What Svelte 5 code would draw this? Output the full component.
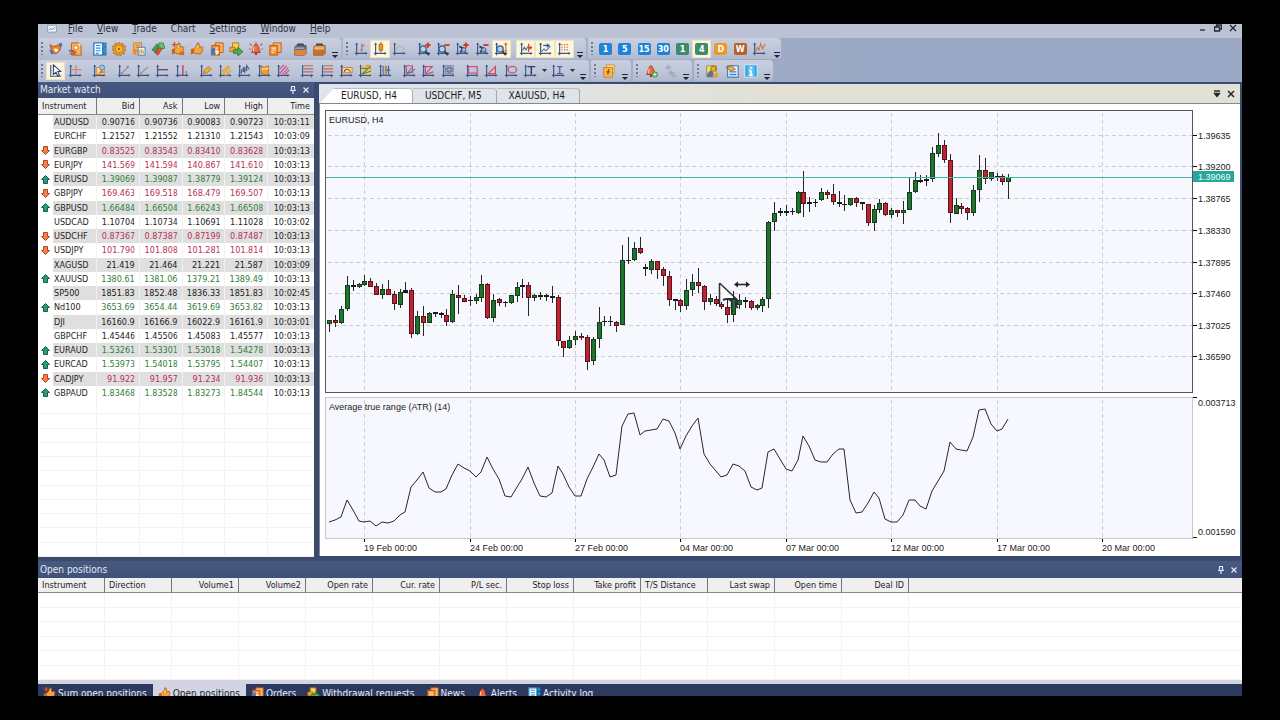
<script>
  // ---------- icons (16 x 16 grid) ----------
  const ax = '<path d="M3 1v14M1 13h14" stroke="#3c568c" stroke-width="1.3" fill="none"/><path d="M1.4 3L3 .6 4.600 3zM13 11.400L15.400 13 13 14.600z" fill="#3c568c"/>';
  const lens = '<circle cx="7" cy="8" r="3.600" fill="#a9d4f2" stroke="#3f5876" stroke-width="1.4"/><path d="M9.500 10.500l4 4.500" stroke="#2d3a50" stroke-width="2.200"/>';
  const plus = '<path d="M12.500 .5v6M9.500 3.500h6" stroke="#d83a24" stroke-width="2.200"/>';
  const minus = '<path d="M9.500 3.500h6" stroke="#d83a24" stroke-width="2.200"/>';
  const thumb = '<path d="M4 8l3.500-3.500L8.500 1c2-.3 2.500 1.500 1.500 4.500h3.500c1.700 0 1.500 2 .4 2.200 1 .6.800 2-.3 2.200.6.800.3 1.800-.7 2 .3 1-.3 1.600-1.400 1.600H7L4 12z" fill="#f5a238" stroke="#a85512" stroke-width=".9"/><path d="M8 6.500l1.500-2.500" stroke="#ffe2a0" stroke-width="1.300"/><path d="M1 8l3-.5v6L1 14z" fill="#c8641c"/>';
  const docs = '<path d="M6 1h9v11H6z" fill="#f9b765" stroke="#b9580f"/><path d="M2 4h9v11H2z" fill="#f58a2c" stroke="#b9580f"/><path d="M4 7h5M4 9.500h5M4 12h3" stroke="#fff0cf" stroke-width="1.200"/>';
  const caseIcon = (a, b) => `<path d="M5.500 5V2.500h6V5" fill="none" stroke="#404452" stroke-width="1.600"/><path d="M2 5.500L4 4h11v9l-2 2H2z" fill="${a}" stroke="#5b4030" stroke-width=".8"/><path d="M2 9h11l2-1.500V13l-2 2H2z" fill="${b}"/><path d="M2 7h11" stroke="#f7cf96" stroke-width="1"/>`;
  const bell = '<path d="M3 12c2-2 1.200-7 3.500-8.500C6.800 1.500 9.200 1.500 9.500 3.500 11.800 5 11 10 13 12z" fill="#ee6a3e" stroke="#a72d1b" stroke-width=".9"/><path d="M6 5.500c-.8 1.500-.4 3.500-1 5" stroke="#ffd0b0" stroke-width="1.300" fill="none"/><circle cx="8" cy="13.500" r="1.500" fill="#b23a20"/>';

  const icons = {
    app: '<path d="M1 2h14v11H1z" fill="#edf2fa" stroke="#6d7ea3"/><path d="M3 10l3-3 3 2 4-4" stroke="#3a8a5c" fill="none" stroke-width="1.300"/>',
    fox: '<path d="M1 3l4 2 4-1 5-2-1 7-5 5-5-4z" fill="#ee7c25" stroke="#9d4311" stroke-width=".8"/><path d="M5 8l3-1 3 2-3 3z" fill="#fff1dc"/><path d="M1 8l5 6H3L1 11z" fill="#3971bd"/><path d="M11 2l4-1v3l-2 2z" fill="#3971bd"/>',
    profile: '<path d="M4 1h8l3 3v11H4z" fill="#f8b15c" stroke="#ad5c18"/><path d="M12 1v3h3" fill="#fff2d6"/><circle cx="9" cy="6.500" r="2.300" fill="#fff" stroke="#d86f1c"/><path d="M1 14l5-5 4 2-2 4z" fill="#db6120"/><path d="M1 9h5v2H1z" fill="#4674b8"/>',
    book: '<path d="M1 1h10v14H1z" fill="#f2faff" stroke="#2d7fc1" stroke-width="1.500"/><path d="M3.500 4h5M3.500 7h5M3.500 10h5M3.500 13h3" stroke="#2f8fd4" stroke-width="1.300"/><path d="M12 1h3v4h-3zM12 6h3v4h-3zM12 11h3v4h-3z" fill="#2c9ae4" stroke="#18639f" stroke-width=".7"/>',
    gear: '<path d="M8 0l1.600 2.300 2.700-1 .5 2.800 2.800.5-1 2.700L16 9l-2.200 1.600.4 2.800-2.800.1L9.600 16 8 14l-2 2-1.500-2.500-2.800-.2.500-2.800L0 9l1.500-2L.6 4.500l2.700-.6.400-2.800 2.800 1z" fill="#e99a22" stroke="#9b5a10" stroke-width=".7"/><circle cx="8" cy="8" r="4" fill="#ffd257" stroke="#b36a12"/><circle cx="8" cy="8" r="1.700" fill="#a96414"/>',
    report: '<path d="M2 1h9v9H2z" fill="#ffc46c" stroke="#c4721c"/><path d="M4 3.500h5M4 6h5" stroke="#b3631b"/><path d="M7 6h8v9H7z" fill="#e9f4fd" stroke="#3278b5"/><path d="M1 9l4-2v8l-4-1z" fill="#f58a20"/><path d="M9 13V9M11 13V8M13 13v-3" stroke="#ef8a25" stroke-width="1.300"/>',
    trade: '<path d="M1 9l6-7 3 3-2 2 1 5-5-1z" fill="#35a254" stroke="#1d6932" stroke-width=".7"/><path d="M9 1h5l2 6-4 1-3-3z" fill="#6bbf6c" stroke="#1d6932" stroke-width=".7"/><path d="M13 7l-5 8-4-3 3-1V7h3z" fill="#e4532f" stroke="#96301a" stroke-width=".7"/>',
    thumbs: thumb + '<path d="M4 0v6M1 3h6" stroke="#dc4b28" stroke-width="1.600"/><path d="M10 11h5v4h-5z" fill="#da671e"/>',
    thumb,
    orders: docs + '<path d="M1 8l5-2v8l-5 1z" fill="#4f76b4"/><path d="M6 9l5 2-4 4z" fill="#fff0ce"/>',
    money: '<path d="M4 1h7v7H4z" fill="#ffd04c" stroke="#ad7315"/><path d="M1 6h6v5H1z" fill="#f1a727" stroke="#a86514" stroke-width=".8"/><path d="M5 9h5V6l6 5-6 5v-3H5z" fill="#49ad4c" stroke="#22702a" stroke-width=".8"/>',
    alarm: bell + '<path d="M1 2l2 2M15 2l-2 2M8 0v1.500M0 8h2M14 8h2" stroke="#d94b33" stroke-width="1.300"/>',
    bell,
    news: docs,
    caseBlue: caseIcon('#496fa6', '#e28435'),
    caseOrange: caseIcon('#e9994c', '#c96f26'),
    bars: ax + '<path d="M9 2v9M7 9h2M9 4h3" stroke="#d07060" stroke-width="1.500"/>',
    candles: ax + '<path d="M9 0v12" stroke="#8c4a10"/><path d="M7 2.500h4v7H7z" fill="#f59a22" stroke="#b15e0f"/>',
    curve: ax + '<path d="M4 11c2-8 7-8 10-2" fill="none" stroke="#c1b48a" stroke-width="1.400"/>',
    zoomIn: ax + lens + plus,
    zoomOut: ax + lens + minus,
    stretch: ax + '<path d="M5 5l4 2 3 5M6 12l3-5" stroke="#2f4165" stroke-width="2"/><circle cx="10" cy="9" r="2.500" fill="#99bfe0" stroke="#394c70"/>' + plus,
    shrink: ax + '<path d="M5 5l4 2 3 5M6 12l3-5" stroke="#2f4165" stroke-width="2"/><circle cx="10" cy="9" r="2.500" fill="#99bfe0" stroke="#394c70"/>' + minus,
    fit: ax + lens + '<path d="M13.500 2v8" stroke="#d8722a" stroke-width="1.400"/><path d="M11.500 3.500L13.500 0l2 3.500zM11.500 9l2 3 2-3z" fill="#d8722a"/>',
    shift: ax + '<path d="M4 10l2-4 2 3 2-4" fill="none" stroke="#50658e" stroke-width="1.200"/><path d="M11 2v9M15 6.500h-3" stroke="#cf4434" stroke-width="1.500"/><path d="M11 6.500l3-2.500v5z" fill="#cf4434"/>',
    scroll: ax + '<path d="M4 11l3-3 2 2 5-5" fill="none" stroke="#546a92" stroke-width="1.200"/><path d="M6 4h5" stroke="#2a5fa8" stroke-width="1.500"/><path d="M10 1.500L14 4l-4 2.500z" fill="#2a5fa8"/>',
    grid: ax + '<path d="M5 3h9M5 6h9M5 9h9" stroke="#d0654f" stroke-width="1.400" stroke-dasharray="1.500 1.500"/>',
    volatility: ax + '<path d="M4 11l2-5 2 3 2-7 2 6 3-6" fill="none" stroke="#d0764a" stroke-width="1.300"/>',
    pointer: '<path d="M2 1v12M1 14h13" stroke="#3d5c9c" stroke-width="1.300"/><path d="M5 1v11l3-2.500L10 14l2-1-2-4.500h3.500z" fill="#fff" stroke="#27437e" stroke-width="1.200"/>',
    cross: ax + '<path d="M9 1v11M4 6.500h11" stroke="#dd8465" stroke-width="1.400"/>',
    note: ax + '<path d="M5 4h9v8H5z" fill="#f6d9a3" stroke="#d87c2b"/><path d="M7 11l4-5 3 4z" fill="#e8752c"/><circle cx="11.500" cy="4" r="2.800" fill="#8fcdf2" stroke="#3d84bc"/>',
    segment: ax + '<path d="M5 11l7-7" stroke="#c08078" stroke-width="1.300"/><path d="M4 9.500h2.500V12H4zM11 2h2.500v2.500H11z" fill="#8a90ac"/>',
    ray: ax + '<path d="M4 12L14 3" stroke="#a38a98" stroke-width="1.400"/>',
    hline: ax + '<path d="M3 6.500h12" stroke="#7c3c66" stroke-width="1.500"/>',
    vline: ax + '<path d="M9 1v12" stroke="#cb3450" stroke-width="1.500"/><path d="M13 8v5" stroke="#5a6c95"/>',
    pencil: ax + '<path d="M5 11l1-4 5-4 3 3-5 4z" fill="#f3b02d" stroke="#b66c15" stroke-width=".9"/>',
    marker: ax + '<path d="M5 12L14 3M4 9l8-7M8 13l7-6" stroke="#eaa72c" stroke-width="1.800"/>',
    waves: ax + '<path d="M5 11V6M7 9V4l2 6V3M11 8V2l3 4" stroke="#4f5e88" stroke-width="1.400" fill="none"/>',
    channel: ax + '<path d="M5 2l3 2 5-2v9l-4 1-4-1z" fill="#f2a12d" stroke="#c26c14"/><path d="M5 6l8-1" stroke="#fff0b6" stroke-width="1.300"/>',
    fork: ax + '<path d="M4 11L12 2M7 12l7-8M4 6l5-5M10 12l5-5" stroke="#d2497c" stroke-width="1.300"/>',
    fibo: '<path d="M3 1v14M13 12v3" stroke="#3c568c" stroke-width="1.300"/><path d="M4 2h11M4 5.500h11M4 9h11" stroke="#bb6a50" stroke-width="1.300"/><path d="M1 13h14" stroke="#3c568c" stroke-width="1.300"/>',
    arcs: ax + '<path d="M4 4h11v6H4z" fill="#f7d9a4" stroke="#c97a2f"/><path d="M6 9c1-4 5-4 7 0" fill="none" stroke="#704f35" stroke-width="1.200"/>',
    fan: ax + '<path d="M4 2h11v10H4z" fill="#f8c45c"/><path d="M4 12L14 3M4 12l11-4M4 5h8" stroke="#468a5a" stroke-width="1.400"/><path d="M9 2h5v4" stroke="#d5672f" fill="none"/>',
    zones: ax + '<path d="M6 2v10M9 2v10M12 2v10M5 7h9" stroke="#4b5f86" stroke-width="1.300"/><path d="M6.500 3h2v8h-2z" fill="#ecb74d"/>',
    gann1: ax + '<path d="M5 2h7v8H5z" fill="none" stroke="#cc4c71" stroke-width="1.300"/><path d="M5 12l10-6M5 12l6-8" stroke="#6f6f8b" stroke-width="1.200"/>',
    gann2: ax + '<path d="M5 3h8l-8 8z" fill="none" stroke="#cc4c71" stroke-width="1.300"/><path d="M5 12l9-3" stroke="#cc4c71" stroke-width="1.300"/>',
    gann3: ax + '<path d="M5 2h9v9H5zM5 5h9M5 8h9M8 2v9M11 2v9" fill="none" stroke="#6f7690" stroke-width=".9"/><circle cx="9.500" cy="6.500" r="3" fill="none" stroke="#5a6382"/>',
    rect: ax + '<path d="M4 3h10v7.500H4z" fill="none" stroke="#cf5577" stroke-width="1.500"/>',
    triangle: ax + '<path d="M5 11L13 3v8z" fill="#e8c1d0" stroke="#cf4562" stroke-width="1.400"/>',
    ellipse: ax + '<ellipse cx="9.500" cy="6.500" rx="4.800" ry="3.800" fill="none" stroke="#cf5577" stroke-width="1.500"/>',
    textT: ax + '<path d="M5 3h9M9.500 3v9" stroke="#2e3e5c" stroke-width="1.700"/>',
    textI: ax + '<path d="M7 3h6M10 3v8M7 11h6" stroke="#55648a" stroke-width="1.500"/>',
    script: '<path d="M5 1h9v9H5z" fill="#ffe09a" stroke="#d98d24"/><path d="M2 4h10v11H2z" fill="#ffb846" stroke="#cf7a16"/><path d="M8.500 6c-2 0-1 3-2 6.500M5 9h4" stroke="#7c4a12" stroke-width="1.300" fill="none"/>',
    alertAdd: bell + '<circle cx="12.500" cy="12" r="3.500" fill="#45a649"/><path d="M12.500 10v4M10.500 12h4" stroke="#fff" stroke-width="1.300"/>',
    muted: '<path d="M6 1v6M3 4h6M9 7v6M6 10h7M12 11v5M10 13.500h5" stroke="#a1aac3" stroke-width="2"/><circle cx="7" cy="7" r="2" fill="#b7bfd2"/>',
    tools: '<path d="M2 2h11v10H2z" fill="#f7dd83" stroke="#a2812d"/><path d="M2 12l4-5 4 3 3 5H2z" fill="#5c7496"/><circle cx="9.500" cy="5.500" r="3" fill="#f2b61d" stroke="#8d6312"/><path d="M9 11h6v4H9z" fill="#e8a322"/>',
    sheet: '<path d="M3 2h12v13H3z" fill="#f3f8fc" stroke="#3d7cb5" stroke-width="1.300"/><path d="M1 4l7-2 4 4-5 2z" fill="#f0ae45" stroke="#7c5620" stroke-width=".8"/><path d="M5 9h8M5 12h8" stroke="#2d83c2" stroke-width="1.500"/>',
    info: '<path d="M1 1h14v14H1z" fill="#2da4e2" stroke="#d9f0fc" stroke-width="1"/><path d="M4 2h8v12H4z" fill="#61c3f1"/><path d="M8 3.500v2M8 7v6M6 7.500h2M6 13h4" stroke="#fff" stroke-width="2"/>'
  };

  const sep = '|';
  const topBars = [
    { size: 'a1', items: ['fox', 'profile', sep, 'book', 'gear', 'report', 'trade', 'thumbs', 'thumb', 'orders', 'money', 'alarm', 'news', sep, 'caseBlue', 'caseOrange'] },
    { size: 'a2', on: ['candles', 'fit', 'shift', 'scroll', 'grid'], items: ['bars', 'candles', 'curve', sep, 'zoomIn', 'zoomOut', 'stretch', 'shrink', 'fit', sep, 'shift', 'scroll', 'grid'] },
    { size: 'a3', on: ['H4'], items: ['M1', 'M5', 'M15', 'M30', 'H1', 'H4', 'D', 'W', 'volatility'] }
  ];
  const drawBars = [
    { size: 'b1', on: ['pointer'], items: ['pointer', 'cross', sep, 'note', sep, 'segment', 'ray', 'hline', 'vline', sep, 'pencil', 'marker', 'waves', 'channel', 'fork', sep, 'fibo', 'fibo', 'arcs', 'fan', 'zones', sep, 'gann1', 'gann2', 'gann3', sep, 'rect', 'triangle', 'ellipse', 'textT', 'v', 'textI', 'v'] },
    { size: 'b2', items: ['script'] },
    { size: 'b3', items: ['alertAdd', 'muted'] },
    { size: 'b4', items: ['tools', 'sheet', 'info'] }
  ];
  const frames = { M1: ['1', 'blue'], M5: ['5', 'blue'], M15: ['15', 'blue'], M30: ['30', 'blue'], H1: ['1', 'green'], H4: ['4', 'green'], D: ['D', 'amber'], W: ['W', 'brown'] };

  const menus = ['File', 'View', 'Trade', 'Chart', 'Settings', 'Window', 'Help'];

  // ---------- market watch ----------
  // name, direction, bid, ask, low, high, time; five-digit quotes show a small last digit
  const quotes = [
    ['AUDUSD', '', '0.90716', '0.90736', '0.90083', '0.90723', '10:03:11'],
    ['EURCHF', '', '1.21527', '1.21552', '1.21310', '1.21543', '10:03:09'],
    ['EURGBP', 'down', '0.83525', '0.83543', '0.83410', '0.83628', '10:03:13'],
    ['EURJPY', 'down', '141.569', '141.594', '140.867', '141.610', '10:03:13'],
    ['EURUSD', 'up', '1.39069', '1.39087', '1.38779', '1.39124', '10:03:13'],
    ['GBPJPY', 'down', '169.463', '169.518', '168.479', '169.507', '10:03:13'],
    ['GBPUSD', 'up', '1.66484', '1.66504', '1.66243', '1.66508', '10:03:13'],
    ['USDCAD', '', '1.10704', '1.10734', '1.10691', '1.11028', '10:03:02'],
    ['USDCHF', 'down', '0.87367', '0.87387', '0.87199', '0.87487', '10:03:13'],
    ['USDJPY', 'down', '101.790', '101.808', '101.281', '101.814', '10:03:13'],
    ['XAGUSD', '', '21.419', '21.464', '21.221', '21.587', '10:03:09'],
    ['XAUUSD', 'up', '1380.61', '1381.06', '1379.21', '1389.49', '10:03:13'],
    ['SP500', '', '1851.83', '1852.48', '1836.33', '1851.83', '10:02:45'],
    ['Nd100', 'up', '3653.69', '3654.44', '3619.69', '3653.82', '10:03:13'],
    ['DJI', '', '16160.9', '16166.9', '16022.9', '16161.9', '10:03:01'],
    ['GBPCHF', '', '1.45446', '1.45506', '1.45083', '1.45577', '10:03:13'],
    ['EURAUD', 'up', '1.53261', '1.53301', '1.53018', '1.54278', '10:03:13'],
    ['EURCAD', 'up', '1.53973', '1.54018', '1.53795', '1.54407', '10:03:13'],
    ['CADJPY', 'down', '91.922', '91.957', '91.234', '91.936', '10:03:13'],
    ['GBPAUD', 'up', '1.83468', '1.83528', '1.83273', '1.84544', '10:03:13']
  ];
  const plain = ['XAGUSD', 'XAUUSD', 'SP500', 'Nd100', 'DJI'];
  const blankRows = Array(11).fill(0);

  // ---------- chart data: high, body top, body bottom, low, kind ----------
  const candles = `320 320 324 332 g|315 320 323 327 r|306 309 323 324 g|276 285 309 311 g|280 285 287 291 k|283 284 287 288 g|275 281 285 286 g|278 281 287 287 r|283 286 295 295 r|284 289 295 299 g|280 289 295 295 r|291 294 304 310 r|289 292 305 308 g|282 290 293 293 k|288 290 334 338 r|311 316 334 335 g|306 316 323 336 r|312 313 323 323 g|312 312 314 317 k|312 313 315 318 k|309 315 322 326 r|290 294 322 323 g|285 295 298 314 r|295 298 302 302 r|296 300 301 306 k|294 297 301 304 g|275 284 298 302 g|283 284 318 319 r|294 300 318 322 g|298 299 303 306 r|301 302 303 307 k|295 295 303 304 g|282 287 296 302 g|279 285 287 298 k|282 285 298 316 r|294 295 298 301 g|292 295 297 300 k|294 295 297 301 k|286 296 298 303 k|295 297 341 346 r|341 341 348 357 r|336 340 348 349 g|331 336 340 345 g|333 336 338 340 r|335 337 362 370 r|337 339 361 365 g|307 322 339 348 g|316 321 322 326 k|316 321 322 326 k|321 322 326 332 r|245 260 325 325 g|237 260 261 264 k|242 248 260 261 g|237 248 253 254 r|264 267 269 276 k|259 261 270 274 g|261 261 270 279 r|267 269 276 286 r|271 276 300 306 r|299 299 301 310 k|299 300 306 312 r|279 290 306 310 g|274 282 290 296 g|268 282 286 293 r|285 286 302 310 r|294 298 302 305 g|296 299 304 306 r|302 304 307 309 r|300 307 315 323 r|291 299 315 322 g|294 300 305 309 g|297 300 302 308 k|300 301 308 310 r|304 305 308 310 g|297 299 306 312 g|221 222 299 308 g|202 213 222 231 g|208 211 213 216 k|205 211 213 216 k|208 211 212 215 k|191 192 213 214 g|171 192 204 217 r|197 202 204 212 k|199 202 203 207 k|188 192 200 201 g|190 192 195 199 r|184 194 202 205 r|191 202 204 207 k|195 204 205 211 k|198 198 205 206 g|197 198 203 207 r|202 202 204 210 k|204 204 223 226 r|205 209 223 231 g|199 203 210 213 g|202 203 215 216 r|208 210 215 218 g|210 210 213 217 r|201 210 213 224 g|178 192 210 210 g|172 180 192 193 g|175 180 182 183 k|175 179 181 186 k|147 153 179 182 g|133 145 154 157 g|140 145 160 163 r|154 160 213 223 r|198 205 214 214 g|203 206 209 214 r|207 208 213 220 r|185 190 213 216 g|155 170 190 202 g|158 170 179 184 r|172 172 179 181 g|173 176 177 181 k|174 176 182 185 r|174 177 182 199 g`
    .split('|').map((row, i) => {
      const [h, t, b, l, kind] = row.split(' ');
      return { x: barX(i), h: +h, t: +t, b: +b, l: +l, kind };
    });
  const edge = { g: '#143c1b', r: '#571419', k: '#1d1a1e' };
  const body = { g: '#20732d', r: '#bd2330' };

  const atr = [522,520,517,500,510,521,522,521,526,522,523,521,515,512,487,480,472,488,492,492,489,475,464,468,471,477,472,457,469,479,496,497,487,479,467,483,496,497,493,466,474,487,496,496,479,467,454,460,477,475,426,414,413,435,431,430,429,419,421,433,449,436,426,418,454,464,471,477,475,464,466,471,487,490,488,452,449,459,469,471,460,436,446,460,462,462,454,449,449,500,513,512,503,492,498,519,522,522,515,500,500,506,509,491,481,471,442,449,450,451,437,410,409,424,431,429,419];
  const atrPoints = atr.map((y, i) => `${barX(i)},${y}`).join(' ');

  function barX(i) {
    return Math.round(329.3 + i * 5.853);
  }

  const dates = ['19 Feb 00:00', '24 Feb 00:00', '27 Feb 00:00', '04 Mar 00:00', '07 Mar 00:00', '12 Mar 00:00', '17 Mar 00:00', '20 Mar 00:00']
    .map((label, i) => ({ label, x: barX(6 + i * 18) }));
  const levels = [['1.39635', 135], ['1.39200', 166], ['1.38765', 198], ['1.38330', 230], ['1.37895', 262], ['1.37460', 293], ['1.37025', 325], ['1.36590', 356]];

  const chartTabs = ['EURUSD, H4', 'USDCHF, M5', 'XAUUSD, H4'];
  const positionCols = ['Instrument', 'Direction', 'Volume1', 'Volume2', 'Open rate', 'Cur. rate', 'P/L sec.', 'Stop loss', 'Take profit', 'T/S Distance', 'Last swap', 'Open time', 'Deal ID'];
  const leftCols = ['Instrument', 'Direction', 'T/S Distance'];
  const bottomTabs = [['thumbs', 'Sum open positions'], ['thumb', 'Open positions'], ['orders', 'Orders'], ['money', 'Withdrawal requests'], ['news', 'News'], ['bell', 'Alerts'], ['book', 'Activity log']];
</script>

{#snippet icon(name)}
  <svg class="icon" viewBox="0 0 16 16" aria-hidden="true">{@html icons[name]}</svg>
{/snippet}

{#snippet toolbar(bar)}
  <div class="bar {bar.size}">
    <span class="grip"></span>
    {#each bar.items as item}
      {#if item === sep}
        <span class="sep"></span>
      {:else if item === 'v'}
        <button class="drop" aria-label="More"><svg viewBox="0 0 5 3"><path d="M0 0h5L2.500 3z" /></svg></button>
      {:else}
        <button class="tool" class:on={bar.on?.includes(item)} aria-label={item}>
          {#if frames[item]}
            <span class="frame {frames[item][1]}">{frames[item][0]}</span>
          {:else}
            {@render icon(item)}
          {/if}
        </button>
      {/if}
    {/each}
    <button class="more" aria-label="Toolbar options"><svg viewBox="0 0 6 6"><path d="M0 0h6v1H0zM0 3h6L3 6z" /></svg></button>
  </div>
{/snippet}

{#snippet panelTitle(text)}
  <header class="title">
    <h2>{text}</h2>
    <button aria-label="Pin"><svg viewBox="0 0 8 8"><path d="M2 .5h4M2.500 .5v4M5.500 .5v4M1 4.500h6M4 4.500V8" /></svg></button>
    <button aria-label="Close"><svg viewBox="0 0 8 8"><path d="M1.500 1.500l5 5M6.500 1.500l-5 5" /></svg></button>
  </header>
{/snippet}

<div class="screen">
  <div class="window">
    <nav class="menu">
      {@render icon('app')}
      {#each menus as m}
        <button>{#if m === 'Chart'}{m}{:else}<u>{m[0]}</u>{m.slice(1)}{/if}</button>
      {/each}
      <span class="winctl">
        <button aria-label="Minimize"><svg viewBox="0 0 8 8"><path d="M1 6h5" /></svg></button>
        <button aria-label="Restore"><svg viewBox="0 0 8 8"><path d="M2.500 3V1h5v4h-2M.5 3h5v4h-5z" /></svg></button>
        <button aria-label="Close"><svg viewBox="0 0 8 8"><path d="M1 1l6 6M7 1L1 7" /></svg></button>
      </span>
    </nav>

    <div class="bars">{#each topBars as bar}{@render toolbar(bar)}{/each}</div>
    <div class="bars">{#each drawBars as bar}{@render toolbar(bar)}{/each}</div>

    <main>
      <section class="watch">
        {@render panelTitle('Market watch')}
        <div class="tablebox">
          <table>
            <colgroup><col class="c-name" /><col /><col /><col /><col /><col class="c-time" /></colgroup>
            <thead>
              <tr><th>Instrument</th><th>Bid</th><th>Ask</th><th>Low</th><th>High</th><th>Time</th></tr>
            </thead>
            <tbody>
              {#each quotes as [name, dir, ...cells]}
                <tr class={dir}>
                  <td>
                    <span class="name">
                      <svg viewBox="0 0 9 9" class="dir" aria-hidden="true">
                        {#if dir === 'up'}<path d="M4.500 .5L8.500 4.500H6.500V8.500H2.500V4.500H.5z" fill="#2f9a78" stroke="#15604c" />{/if}
                        {#if dir === 'down'}<path d="M4.500 8.500L8.500 4.500H6.500V.5H2.500V4.500H.5z" fill="#f3814d" stroke="#b9431c" />{/if}
                      </svg>
                      <span class="label">{name}</span>
                    </span>
                  </td>
                  {#each cells as c, i}
                    <td>{#if i < 4 && !plain.includes(name)}{c.slice(0, -1)}<small>{c.slice(-1)}</small>{:else}{c}{/if}</td>
                  {/each}
                </tr>
              {/each}
              {#each blankRows as _}
                <tr class="blank"><td></td><td></td><td></td><td></td><td></td><td></td></tr>
              {/each}
            </tbody>
          </table>
        </div>
      </section>

      <section class="charts">
        <div class="tabs">
          {#each chartTabs as t, i}<button class:active={i === 0}>{t}</button>{/each}
          <span class="tabctl">
            <button aria-label="List tabs"><svg viewBox="0 0 8 8"><path d="M1 1h6M1.500 3.500h5L4 6.500z" fill="#222" /></svg></button>
            <button aria-label="Close chart"><svg viewBox="0 0 8 8"><path d="M1 1l6 6M7 1L1 7" stroke-width="1.500" /></svg></button>
          </span>
        </div>
        <div class="plots">
          <div class="plot price">
            <svg>
              <g transform="translate(-326 -111)" shape-rendering="crispEdges">
                {#each levels as [, y]}<line class="gridline" x1="328" x2="3000" y1={y + 0.5} y2={y + 0.5} />{/each}
                {#each dates as d}<line class="gridline" x1={d.x + 0.5} x2={d.x + 0.5} y1="113" y2="393" />{/each}
                {#each candles as c}
                  <rect x={c.x} y={c.h} width="1" height={c.l - c.h} fill="#26262b" />
                  <rect x={c.x - 2} y={c.t} width="5" height={Math.max(1, c.b - c.t)} fill={edge[c.kind]} />
                  {#if c.kind !== 'k'}
                    <rect x={c.x - 1} y={c.t + 1} width="3" height={Math.max(1, c.b - c.t - 2)} fill={body[c.kind]} />
                  {/if}
                {/each}
                <rect x="326" y="177" width="3000" height="1" fill="#3fb3a4" />
              </g>
              <g transform="translate(-326 -111)">
                <path d="M721 286v15l4-2 9 0z" fill="#fff" opacity=".7" />
                <path d="M719.500 283v21M719.500 283l18 17" fill="none" stroke="#2f3038" stroke-width="1.500" />
                <path d="M723 300c4-2 9-1 9 3s-2 5 1 9M727 299h9c2 4-2 6 2 9" fill="none" stroke="#2f3038" stroke-width="2" />
                <path d="M736 284.500h12" stroke="#222" stroke-width="1.600" />
                <path d="M734 284.500l4-3v6zM750 284.500l-4-3v6z" fill="#222" />
              </g>
              <text x="3" y="12">EURUSD, H4</text>
            </svg>
          </div>
          <div class="axis">
            <svg>
              <g transform="translate(-1193 -110)">
                {#each levels as [label, y]}
                  <rect x="1193" {y} width="4" height="1" />
                  <text x="1198" y={y + 4}>{label}</text>
                {/each}
                <rect x="1193" y="171" width="41" height="11" fill="#27a699" />
                <text class="tag" x="1198" y="180">1.39069</text>
              </g>
            </svg>
          </div>
          <div class="plot atr">
            <svg>
              <g transform="translate(-326 -398)">
                {#each dates as d}<line class="gridline" x1={d.x + 0.5} x2={d.x + 0.5} y1="400" y2="538" />{/each}
                <polyline points={atrPoints} />
              </g>
              <text x="3" y="12">Average true range (ATR) (14)</text>
            </svg>
          </div>
          <div class="axis">
            <svg>
              <rect x="0" y="0" width="4" height="1" />
              <text x="5" y="9">0.003713</text>
              <text x="5" y="138">0.001590</text>
              <rect x="0" y="140" width="4" height="1" />
            </svg>
          </div>
          <div class="axis">
            <svg>
              <g transform="translate(-325 -539)">
                {#each dates as d}
                  <rect x={d.x} y="539" width="1" height="3" />
                  <text x={d.x} y="551">{d.label}</text>
                {/each}
              </g>
            </svg>
          </div>
        </div>
      </section>
    </main>

    <section class="positions">
      {@render panelTitle('Open positions')}
      <div class="tablebox">
        <table>
          <colgroup>{#each positionCols as _}<col class="c-pos" />{/each}<col /></colgroup>
          <thead>
            <tr>{#each positionCols as c}<th class:left={leftCols.includes(c)}>{c}</th>{/each}<th></th></tr>
          </thead>
          <tbody>
            {#each Array(6) as _}
              <tr class="blank">{#each positionCols as _}<td></td>{/each}<td></td></tr>
            {/each}
          </tbody>
        </table>
      </div>
    </section>

    <nav class="bottom">
      {#each bottomTabs as [ic, label], i}
        <button class:active={i === 1}>{@render icon(ic)}{label}</button>
      {/each}
    </nav>
  </div>
</div>

<style>
  :global(body) { margin: 0; background: #000; }
  .screen { box-sizing: border-box; height: 100vh; padding: 24px 38px; background: #000; }
  .window {
    height: 100%; display: flex; flex-direction: column; overflow: hidden;
    background: #3b4a6f; color: #1c1c22;
    font: 10px/12px "DejaVu Sans Condensed", "DejaVu Sans", sans-serif;
  }
  button { border: 0; margin: 0; padding: 0; background: none; font: inherit; color: inherit; white-space: nowrap; flex: none; }
  svg { display: block; flex: none; }
  .icon { width: 14px; height: 14px; }

  .menu { flex: none; height: 14px; display: flex; align-items: flex-start; gap: 14px; padding-left: 8px; background: #bac2d4; color: #2b3040; }
  .menu > button { line-height: 9px; }
  .menu .icon { width: 12px; height: 10px; margin-right: -4px; }
  .winctl { margin-left: auto; display: flex; gap: 7px; padding-right: 5px; }
  .winctl svg, .tabctl svg { width: 8px; height: 8px; fill: none; stroke: #22262f; stroke-width: 1.3; }

  .bars { flex: none; height: 22px; display: flex; gap: 2px; background: linear-gradient(90deg, #b4bdd2, #9ba8c5 70%); }
  .bar {
    display: flex; align-items: center; box-sizing: border-box; height: 21px;
    background: linear-gradient(#c9cfdf, #bdc5d8 60%, #b0b9cf); border-radius: 2px 4px 4px 2px;
  }
  .a1 { width: 303px; }
  .a2 { width: 243px; }
  .a3 { width: 193px; }
  .b1 { width: 551px; }
  .b2 { width: 40px; }
  .b3 { width: 59px; }
  .b4 { width: 79px; }
  .grip { flex: none; width: 2px; height: 13px; margin: 0 3px; background: repeating-linear-gradient(#6f7b98 0 2px, transparent 2px 4px); }
  .sep { flex: none; width: 5px; }
  .tool { flex: 1 1 0; min-width: 0; height: 18px; display: grid; place-items: center; }
  .tool.on { background: #fdf6de; outline: 1px solid #efe3b8; outline-offset: -1px; }
  .drop { width: 9px; height: 18px; display: grid; place-items: center; }
  .drop svg { width: 5px; height: 3px; fill: #2a3145; }
  .more { width: 12px; height: 18px; display: grid; place-items: end center; }
  .a3 .more { padding-left: 4px; }
  .more svg { width: 6px; height: 6px; fill: #1f2637; }
  .frame { width: 13px; height: 12px; border-radius: 2px; color: #fff; font: bold 9px/12px "DejaVu Sans Condensed", "DejaVu Sans", sans-serif; text-align: center; }
  .blue { background: #1f82d8; }
  .green { background: #3e8a6c; }
  .amber { background: #ee9a22; }
  .brown { background: #b5612a; }

  main { flex: 1; min-height: 0; display: flex; gap: 5px; padding: 0 2px 0 0; }
  .title { flex: none; height: 16px; display: flex; align-items: center; gap: 5px; padding: 0 4px 0 2px; color: #e4e9f4; background: linear-gradient(#47597f, #40527a); }
  .title h2 { margin: 0 auto 0 0; font: inherit; }
  .title svg { width: 8px; height: 8px; fill: none; stroke: #e4e9f4; stroke-width: 1.2; }

  .watch { flex: none; width: 276px; display: flex; flex-direction: column; }
  .tablebox { flex: 1; min-height: 0; background: #fff; }
  table { width: 100%; height: 100%; border-collapse: separate; border-spacing: 0; table-layout: fixed; font-size: 9px; line-height: 12px; }
  .c-name { width: 59px; }
  .c-time { width: 46px; }
  .c-pos { width: 67px; }
  th { height: 15px; box-sizing: border-box; padding: 0 4px; text-align: right; font-weight: normal; background: #efeff0; border-right: 1px solid #77787c; border-bottom: 1px solid #8a8a8e; white-space: nowrap; }
  .watch th { height: 17px; }
  th:first-child, .left { text-align: left; }
  td { height: 14px; box-sizing: border-box; }
  .watch td { padding: 0 4px 0 0; text-align: right; white-space: nowrap; border-right: 1px solid #f1f1f3; }
  .watch td:first-child { padding: 0; }
  .watch td:last-child, th:last-child { border-right: 0; }
  .watch tbody tr:nth-child(odd):not(.blank) td { background: #dfdfe0; }
  .watch tbody tr:nth-child(odd):not(.blank) td:first-child { background: linear-gradient(90deg, #fff 15px, #dfdfe0 15px); }
  .name { display: flex; align-items: center; gap: 4px; padding-left: 3px; }
  .dir { width: 9px; height: 9px; }
  small { font-size: 8px; line-height: 8px; }
  .up td + td:not(:last-child) { color: #2f8038; }
  .down td + td:not(:last-child) { color: #b92f55; }
  .blank td { padding: 0; border-right: 1px solid #f8f1f2; border-bottom: 1px solid #f8efef; }

  .charts { flex: 1; min-width: 0; display: flex; flex-direction: column; background: #fff; margin-bottom: 1px; }
  .tabs { flex: none; height: 22px; box-sizing: border-box; display: flex; align-items: flex-end; padding: 0 5px 0 1px; background: linear-gradient(90deg, #dde4ee, #e3e1d6 50%); border-bottom: 1px solid #85878c; border-top: 2px solid #3b4a6f; }
  .tabs > button { height: 15px; line-height: 14px; padding: 0 14px 0 12px; background: #dfe3ea; border-right: 1px solid #a2a6b0; border-top: 1px solid #b9bdc6; border-radius: 0 4px 0 0; }
  .tabs > .active { padding: 0 15px 0 21px; background: #fff; clip-path: polygon(0 100%, 14px 0, 100% 0, 100% 100%); }
  .tabctl { margin-left: auto; display: flex; gap: 6px; padding-bottom: 5px; }
  .plots { flex: 1; min-height: 0; display: grid; grid-template-columns: 1fr 47px; grid-template-rows: 2fr 4px 1fr 17px; padding: 6px 0 0 5px; border-left: 1px solid #85878c; }
  .plot { grid-column: 1; box-sizing: border-box; background: #f7f7fe; border: 1px solid #c6c6ce; min-width: 0; min-height: 0; }
  .plot.price { grid-row: 1; border-color: #55565c; }
  .plot.atr { grid-row: 3; }
  .axis { min-width: 0; min-height: 0; }
  .plots svg { width: 100%; height: 100%; overflow: hidden; }
  .price + .axis { grid-row: 1; }
  .atr + .axis { grid-row: 3; }
  .axis:last-child { grid-row: 4; grid-column: 1; }
  .plots text { font: 9px "Liberation Sans", sans-serif; fill: #1c1c20; }
  .plots .tag { fill: #e6fffb; }
  .gridline { stroke: #cdcdd6; stroke-dasharray: 4 3; }
  polyline { fill: none; stroke: #26262c; stroke-width: 1; }

  .positions { flex: none; height: 127px; display: flex; flex-direction: column; padding-top: 4px; box-sizing: border-box; }
  .positions .title { height: 17px; }
  .positions .tablebox { border-bottom: 4px solid #d2d5e1; }

  .bottom { flex: none; height: 12px; display: flex; overflow: hidden; background: #2c3a60; color: #e8ecf5; }
  .bottom button { height: 19px; display: flex; align-items: center; gap: 2px; padding: 0 6px 0 5px; }
  .bottom .icon { width: 13px; height: 13px; }
  .bottom .active { background: #d2d5e1; color: #23262f; }
</style>
